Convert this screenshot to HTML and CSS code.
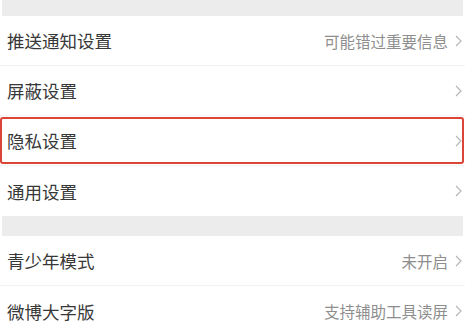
FILE: index.html
```html
<!DOCTYPE html>
<html lang="zh-CN">

<head>
    <meta charset="UTF-8">
    <meta name="viewport" content="width=device-width, initial-scale=1.0">
    <title>设置</title>
    <link rel="stylesheet" href="styles.css">
</head>

<body>
    <div class="gap gap-top"></div>

    <div class="group">
        <div class="item">
            <span class="label">推送通知设置</span>
            <span class="extra">可能错过重要信息</span>
            <svg class="arrow" viewBox="0 0 7 12"><polyline points="1,1 6,6 1,11" /></svg>
        </div>
        <div class="item">
            <span class="label">屏蔽设置</span>
            <svg class="arrow" viewBox="0 0 7 12"><polyline points="1,1 6,6 1,11" /></svg>
        </div>
        <div class="item item-marked">
            <span class="label">隐私设置</span>
            <svg class="arrow" viewBox="0 0 7 12"><polyline points="1,1 6,6 1,11" /></svg>
        </div>
        <div class="item">
            <span class="label">通用设置</span>
            <svg class="arrow" viewBox="0 0 7 12"><polyline points="1,1 6,6 1,11" /></svg>
        </div>
    </div>

    <div class="gap"></div>

    <div class="group">
        <div class="item">
            <span class="label">青少年模式</span>
            <span class="extra">未开启</span>
            <svg class="arrow" viewBox="0 0 7 12"><polyline points="1,1 6,6 1,11" /></svg>
        </div>
        <div class="item">
            <span class="label">微博大字版</span>
            <span class="extra">支持辅助工具读屏</span>
            <svg class="arrow" viewBox="0 0 7 12"><polyline points="1,1 6,6 1,11" /></svg>
        </div>
    </div>
</body>

</html>
```

FILE: styles.css
```css
body {
    font-family: "Noto Sans CJK SC", "Noto Sans", sans-serif;
    margin: 0;
    padding: 0;
    background-color: #fff;
    overflow: hidden;
}

.gap {
    height: 20px;
    margin: 0 2px;
    background: #ececec;
}

.gap-top {
    height: 16px;
}

.item {
    position: relative;
    display: flex;
    align-items: center;
    height: 50px;
    box-sizing: border-box;
    padding: 0 3px 0 7px;
    border-bottom: 1px solid #f3f3f3;
}

.item:last-child {
    border-bottom: none;
}

.label {
    flex: 1;
    font-size: 17.5px;
    color: #383838;
}

.extra {
    font-size: 15.5px;
    color: #8e8e8e;
    margin-right: 7px;
}

.arrow {
    width: 7px;
    height: 12px;
    fill: none;
    stroke: #b3b3b3;
    stroke-width: 1.1;
}

.item-marked::after {
    content: "";
    position: absolute;
    left: 0;
    right: 1px;
    top: 1px;
    bottom: 1px;
    border: 2px solid #dc4438;
    border-radius: 3px;
}
```
